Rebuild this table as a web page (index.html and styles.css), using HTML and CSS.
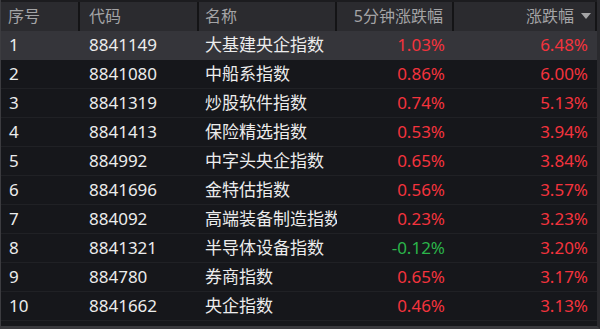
FILE: index.html
```html
<!DOCTYPE html>
<html lang="zh-CN">
<head>
    <meta charset="UTF-8">
    <title>指数涨幅榜</title>
    <link rel="stylesheet" href="styles.css">
</head>
<body>
    <div class="board">
        <!-- Header -->
        <div class="row head">
            <div class="cell">序号</div>
            <div class="cell">代码</div>
            <div class="cell">名称</div>
            <div class="cell num">5分钟涨跌幅</div>
            <div class="cell num sorted">涨跌幅<span class="arrow"></span></div>
        </div>

        <div class="row selected">
            <div class="cell">1</div><div class="cell">8841149</div><div class="cell">大基建央企指数</div>
            <div class="cell num up">1.03%</div><div class="cell num up">6.48%</div>
        </div>
        <div class="row">
            <div class="cell">2</div><div class="cell">8841080</div><div class="cell">中船系指数</div>
            <div class="cell num up">0.86%</div><div class="cell num up">6.00%</div>
        </div>
        <div class="row">
            <div class="cell">3</div><div class="cell">8841319</div><div class="cell">炒股软件指数</div>
            <div class="cell num up">0.74%</div><div class="cell num up">5.13%</div>
        </div>
        <div class="row">
            <div class="cell">4</div><div class="cell">8841413</div><div class="cell">保险精选指数</div>
            <div class="cell num up">0.53%</div><div class="cell num up">3.94%</div>
        </div>
        <div class="row">
            <div class="cell">5</div><div class="cell">884992</div><div class="cell">中字头央企指数</div>
            <div class="cell num up">0.65%</div><div class="cell num up">3.84%</div>
        </div>
        <div class="row">
            <div class="cell">6</div><div class="cell">8841696</div><div class="cell">金特估指数</div>
            <div class="cell num up">0.56%</div><div class="cell num up">3.57%</div>
        </div>
        <div class="row">
            <div class="cell">7</div><div class="cell">884092</div><div class="cell">高端装备制造指数</div>
            <div class="cell num up">0.23%</div><div class="cell num up">3.23%</div>
        </div>
        <div class="row">
            <div class="cell">8</div><div class="cell">8841321</div><div class="cell">半导体设备指数</div>
            <div class="cell num down">-0.12%</div><div class="cell num up">3.20%</div>
        </div>
        <div class="row">
            <div class="cell">9</div><div class="cell">884780</div><div class="cell">券商指数</div>
            <div class="cell num up">0.65%</div><div class="cell num up">3.17%</div>
        </div>
        <div class="row">
            <div class="cell">10</div><div class="cell">8841662</div><div class="cell">央企指数</div>
            <div class="cell num up">0.46%</div><div class="cell num up">3.13%</div>
        </div>
    </div>
</body>
</html>
```

FILE: styles.css
```css
* {
    margin: 0;
    padding: 0;
    box-sizing: border-box;
}

body {
    background: #16171b;
    font-family: "Noto Sans", "Noto Sans CJK SC", sans-serif;
    color: #ececec;
}

.board {
    width: 600px;
    height: 329px;
    background: #16171b;
    border-left: 1px solid #3c3c40;
    border-right: 3px solid #2a2a2e;
    border-bottom: 3px solid #3a3a3e;
    overflow: hidden;
}

.row {
    display: grid;
    grid-template-columns: 79px 119px 138px 117px 143px;
    height: 29px;
    align-items: center;
    border-bottom: 1px solid #202125;
    font-size: 17px;
}

.cell {
    white-space: nowrap;
    overflow: hidden;
    line-height: 28px;
}

.cell:nth-child(1) { padding-left: 8px; }
.cell:nth-child(2) { padding-left: 9px; }
.cell:nth-child(3) { padding-left: 6px; }

.num {
    text-align: right;
    padding-right: 9px;
}

/* Header */
.head {
    height: 31px;
    background: #2b2b2f;
    border-top: 2px solid #1c1c1f;
    border-bottom: none;
    color: #a4a4a6;
    font-size: 16px;
}

.head .cell {
    line-height: 29px;
    height: 29px;
    border-right: 2px solid #141416;
}

.head .cell:nth-child(1) { padding-left: 7px; }

.head .sorted {
    padding-right: 4px;
}

.arrow {
    display: inline-block;
    width: 0;
    height: 0;
    margin-left: 7px;
    margin-bottom: 3px;
    border-left: 5px solid transparent;
    border-right: 5px solid transparent;
    border-top: 6px solid #a4a4a6;
    vertical-align: middle;
}

.selected {
    background: #35353a;
    border-bottom-color: #35353a;
}

.up { color: #f4333d; }
.down { color: #2bb44a; }
```
